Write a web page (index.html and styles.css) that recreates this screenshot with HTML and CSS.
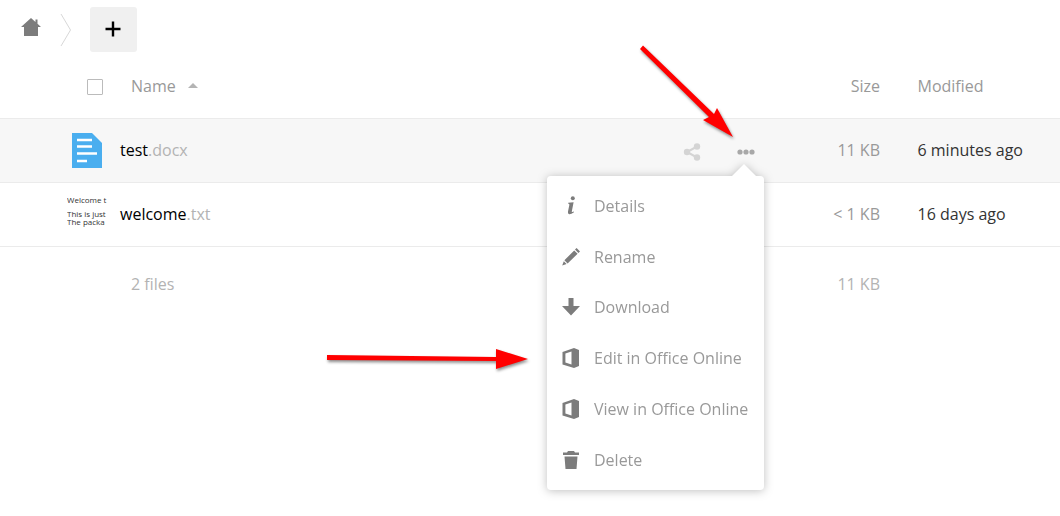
FILE: index.html
```html
<!DOCTYPE html>
<html lang="en">

<head>
	<meta charset="UTF-8">
	<meta name="viewport" content="width=device-width, initial-scale=1.0">
	<title>Files</title>
	<link rel="stylesheet" href="styles.css">
</head>

<body>
	<div class="page">
		<div class="controls">
			<svg class="home-icon" width="20" height="20" viewBox="0 0 20 20">
				<path fill="#7c7c7c" d="M10 1 L14.5 5 V2.5 H16.5 V6.8 L20 10 H17 V19 H3 V10 H0 Z" />
			</svg>
			<svg class="crumb-sep" width="12" height="34" viewBox="0 0 12 34">
				<path fill="none" stroke="#d8d8d8" d="M1 1 L10.5 17 L1 33" />
			</svg>
			<button class="add-button" type="button">
				<svg width="16" height="16" viewBox="0 0 16 16">
					<path fill="none" stroke="#000" stroke-width="2.4" d="M8 0.5 V15.5 M0.5 8 H15.5" />
				</svg>
			</button>
		</div>

		<div class="file-head">
			<span class="select-all"></span>
			<span class="col-name">Name</span>
			<span class="sort-caret"></span>
			<span class="col-size">Size</span>
			<span class="col-modified">Modified</span>
		</div>

		<div class="file-row active">
			<div class="thumb">
				<svg width="32" height="36" viewBox="0 0 32 36">
					<path fill="#4aaeef" d="M1 0 H21 L31 10 V35 H1 Z" />
					<path fill="none" stroke="#fff" stroke-width="2.4" d="M6 7 H21 M6 13.5 H21 M6 20.5 H26 M6 28 H16" />
				</svg>
			</div>
			<div class="file-name">test<span class="ext">.docx</span></div>
			<div class="actions">
				<svg class="share-icon" width="18" height="18" viewBox="0 0 18 18">
					<path fill="none" stroke="#d4d4d4" stroke-width="2" d="M14 3.5 L4 9 L14 14.5" />
					<circle cx="14" cy="3.5" r="3.2" fill="#d4d4d4" />
					<circle cx="4" cy="9" r="3.2" fill="#d4d4d4" />
					<circle cx="14" cy="14.5" r="3.2" fill="#d4d4d4" />
				</svg>
				<svg class="more-icon" width="18" height="6" viewBox="0 0 18 6">
					<circle cx="3" cy="3" r="2.6" fill="#a8a8a8" />
					<circle cx="9" cy="3" r="2.6" fill="#a8a8a8" />
					<circle cx="15" cy="3" r="2.6" fill="#a8a8a8" />
				</svg>
			</div>
			<div class="file-size">11 KB</div>
			<div class="file-date">6 minutes ago</div>
		</div>

		<div class="file-row">
			<div class="thumb text-thumb">
				<p>Welcome t</p>
				<p class="gap">This is just</p>
				<p>The packa</p>
			</div>
			<div class="file-name">welcome<span class="ext">.txt</span></div>
			<div class="actions"></div>
			<div class="file-size">&lt; 1 KB</div>
			<div class="file-date">16 days ago</div>
		</div>

		<div class="file-summary">
			<span class="summary-count">2 files</span>
			<span class="file-size">11 KB</span>
			<span class="file-date"></span>
		</div>

		<ul class="popover">
			<li>
				<svg width="20" height="20" viewBox="0 0 20 20">
					<circle cx="11.8" cy="2.2" r="2" fill="#7c7c7c" />
					<path fill="#7c7c7c" d="M7.2 6.8 L12.6 6.2 L10.8 15.4 Q10.7 16.6 12.8 15.6 L13 16.2 Q10 18.4 8.2 18.2 Q6.4 18 7 15.6 L8.4 8.8 Q8.4 7.8 7.1 7.6 Z" />
				</svg>
				Details
			</li>
			<li>
				<svg width="20" height="20" viewBox="0 0 20 20">
					<path fill="#7c7c7c" d="M15.6 1 L19 4.4 L17.4 6 L14 2.6 Z M13.2 3.4 L16.6 6.8 L6.6 16.4 L3.4 13.2 Z M2.8 14.2 L5.6 17 L1.2 18.4 Z" />
				</svg>
				Rename
			</li>
			<li>
				<svg width="20" height="20" viewBox="0 0 20 20">
					<path fill="#7c7c7c" d="M7.5 1 H12.5 V9 H19 L10 18.5 L1 9 H7.5 Z" />
				</svg>
				Download
			</li>
			<li>
				<svg width="20" height="20" viewBox="0 0 20 20">
					<path fill="#7c7c7c" fill-rule="evenodd" d="M13 0 L18 2 V18 L13 20 L1.5 16.5 V4 Z M10.5 3.5 L4.4 5.5 V14.5 L10.5 16.5 Z" />
				</svg>
				Edit in Office Online
			</li>
			<li>
				<svg width="20" height="20" viewBox="0 0 20 20">
					<path fill="#7c7c7c" fill-rule="evenodd" d="M13 0 L18 2 V18 L13 20 L1.5 16.5 V4 Z M10.5 3.5 L4.4 5.5 V14.5 L10.5 16.5 Z" />
				</svg>
				View in Office Online
			</li>
			<li>
				<svg width="20" height="20" viewBox="0 0 20 20">
					<path fill="#7c7c7c" d="M7 1 H13 L14 2.5 H18 V5 H2 V2.5 H6 Z M3.5 6.5 H16.5 L15.5 19 H4.5 Z" />
				</svg>
				Delete
			</li>
		</ul>

		<!-- annotation arrows drawn on top of the screenshot -->
		<svg class="arrows" width="1060" height="516" viewBox="0 0 1060 516">
			<path fill="#f00" d="M643 45.5 L714 114 L717 108 L733 137 L703 120 L709 117 L640 49 Z" />
			<path fill="#f00" d="M327 355 L496 357 V349 L528 359 L496 369 V361 L327 360 Z" />
		</svg>
	</div>
</body>

</html>
```

FILE: styles.css
```css
body {
	font-family: "Open Sans", Arial, sans-serif;
	font-size: 16px;
	background-color: #fff;
	color: #000;
	margin: 0;
	padding: 0;
}

.page {
	position: relative;
	width: 1060px;
	height: 516px;
	overflow: hidden;
}

.controls {
	display: flex;
	align-items: center;
	height: 45px;
	padding: 7px 0 0 21px;
}

.home-icon {
	margin-top: -6px;
}

.crumb-sep {
	margin: 0 0 0 19px;
}

.add-button {
	display: flex;
	align-items: center;
	justify-content: center;
	width: 47px;
	height: 45px;
	margin-left: 18px;
	background-color: #f0f0f0;
	border: none;
	border-radius: 3px;
	padding: 0 1px 1px 0;
}

.file-head {
	display: flex;
	align-items: center;
	height: 67px;
	box-sizing: border-box;
	padding: 1px 0 0 87px;
	color: #999;
	border-bottom: 1px solid #ebebeb;
}

.select-all {
	width: 14px;
	height: 14px;
	border: 1px solid #bbb;
	border-radius: 1px;
	margin-top: 2px;
}

.col-name {
	margin-left: 28px;
}

.sort-caret {
	width: 0;
	height: 0;
	margin-left: 12px;
	border-left: 5px solid transparent;
	border-right: 5px solid transparent;
	border-bottom: 5px solid #b4b4b4;
}

.col-size {
	margin-left: auto;
	width: 60px;
	text-align: right;
}

.col-modified {
	width: 142.5px;
	margin-left: 37.5px;
}

.file-row {
	display: flex;
	align-items: center;
	height: 64px;
	box-sizing: border-box;
	padding-left: 67px;
	border-bottom: 1px solid #ebebeb;
}

.file-row.active {
	background-color: #f7f7f7;
}

.thumb {
	display: flex;
	align-items: center;
	justify-content: center;
	width: 40px;
	height: 40px;
	margin-right: 13px;
	overflow: hidden;
}

.text-thumb {
	display: block;
	font-size: 8px;
	line-height: 8px;
	white-space: nowrap;
	color: #333;
	padding-top: 1px;
	box-sizing: border-box;
}

.text-thumb p {
	margin: 0;
}

.text-thumb .gap {
	margin-top: 6px;
}

.file-name {
	flex: 1;
	margin-top: -1px;
}

.ext {
	color: #b3b3b3;
}

.actions {
	display: flex;
	align-items: center;
	margin-right: 45px;
	padding-top: 2px;
}

.share-icon {
	margin-right: 36px;
}

.file-size {
	width: 80px;
	text-align: right;
	color: #999;
}

.file-row .file-size {
	margin-top: -1px;
}

.file-date {
	width: 142.5px;
	margin-left: 37.5px;
	margin-top: -1px;
	color: #333;
}

.file-summary {
	display: flex;
	height: 74px;
	align-items: center;
	padding-left: 131px;
	color: #b3b3b3;
}

.file-summary .file-size {
	margin-left: auto;
	color: #b3b3b3;
}

.summary-count {
	flex: 1;
}

.popover {
	position: absolute;
	left: 547px;
	top: 176px;
	width: 217px;
	box-sizing: border-box;
	margin: 0;
	padding: 4.4px 0 5px;
	list-style: none;
	background-color: #fff;
	border-radius: 4px;
	color: #999;
	filter: drop-shadow(0 1px 5px rgba(0, 0, 0, 0.25));
}

.popover::before {
	content: "";
	position: absolute;
	left: 184px;
	top: -12px;
	width: 0;
	height: 0;
	border-left: 13px solid transparent;
	border-right: 13px solid transparent;
	border-bottom: 13px solid #fff;
}

.popover li {
	display: flex;
	align-items: center;
	gap: 13px;
	height: 50.75px;
	padding-left: 14px;
}

.arrows {
	position: absolute;
	left: 0;
	top: 0;
	filter: drop-shadow(1px 2px 1.5px rgba(0, 0, 0, 0.45));
}
```
